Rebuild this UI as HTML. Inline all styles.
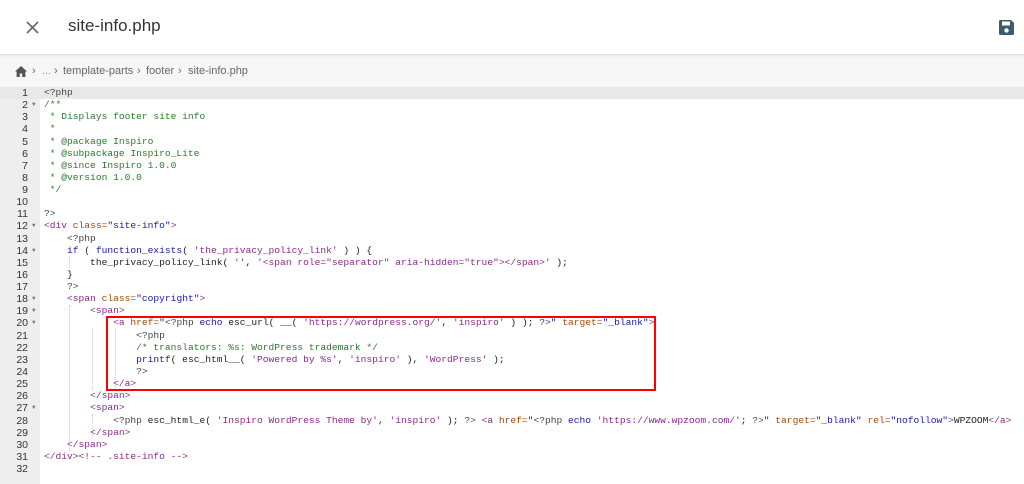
<!DOCTYPE html>
<html><head><style>
body{margin:0;width:1024px;height:484px;overflow:hidden;background:#fff;font-family:"Liberation Sans",sans-serif;position:relative}
.hdr{position:absolute;left:0;top:0;width:1024px;height:54px;background:#fff;box-shadow:0 1px 3px rgba(0,0,0,.12);z-index:2}
.title{position:absolute;left:68px;top:16px;font-size:17px;color:#333}
.bc{position:absolute;left:0;top:54px;width:1024px;height:33px;background:#f6f6f6}
.bci{position:absolute;top:65px;font-size:11px;color:#666}
.gut{position:absolute;left:0;top:87px;width:40px;height:397px;background:#eeeeee}
.hl{position:absolute;left:0;top:87px;width:1024px;height:12px;background:#e8e8e8}
.code{position:absolute;left:0;top:87px;font-family:"Liberation Mono",monospace;font-size:9.6px;line-height:12.13px;white-space:pre;color:#222}
.ln{position:absolute;left:0;width:28px;text-align:right;color:#333;font-family:"Liberation Sans",sans-serif;font-size:10.5px}
.fd{position:absolute;left:32px;color:#777;font-size:6px}
.c{color:#2a7a2a}.t{color:#8a2a8a}.a{color:#9a4a10}.s{color:#1a1aa6}.k{color:#1a1a9a}.p{color:#444}
.box{position:absolute;left:106px;top:316px;width:546px;height:71px;border:2.5px solid #f00}
.g{position:absolute;border-left:1px dotted #ccc;width:0}
</style></head><body>
<div class="hdr">
<svg style="position:absolute;left:26px;top:21px" width="13" height="13" viewBox="0 0 13 13"><path d="M1 1L12 12M12 1L1 12" stroke="#666" stroke-width="1.6"/></svg>
<div class="title">site-info.php</div>
<svg style="position:absolute;left:999px;top:20px" width="15" height="15" viewBox="0 0 15 15"><path d="M0 1.5Q0 0 1.5 0H12L15 3V13.5Q15 15 13.5 15H1.5Q0 15 0 13.5Z" fill="#3e5b6d"/><rect x="3" y="1.5" width="8" height="4" fill="#fff"/><circle cx="7.5" cy="10.5" r="2.2" fill="#fff"/></svg>
</div>
<div class="bc"></div>
<svg style="position:absolute;left:15px;top:66px" width="12" height="11" viewBox="0 0 12 11"><path d="M6 0L0 5.5H1.6V11H4.8V7.5H7.2V11H10.4V5.5H12Z" fill="#555"/></svg>
<div class="bci" style="left:32px">›</div>
<div class="bci" style="left:42px;color:#999">...</div>
<div class="bci" style="left:54px">›</div>
<div class="bci" style="left:63px">template-parts</div>
<div class="bci" style="left:137px">›</div>
<div class="bci" style="left:146px">footer</div>
<div class="bci" style="left:178px">›</div>
<div class="bci" style="left:188px">site-info.php</div>
<div class="gut"></div><div class="hl"></div>
<div class="g" style="left:69px;top:256px;height:12px"></div>
<div class="g" style="left:69px;top:305px;height:146px"></div>
<div class="g" style="left:92px;top:329px;height:61px"></div>
<div class="g" style="left:92px;top:414px;height:24px"></div>
<div class="g" style="left:115px;top:329px;height:61px"></div>
<div class="code" id="c"></div>
<div class="box"></div>
<script>
var L=[
'<span class="p">&lt;?php</span>',
'<span class="c">/**</span>',
'<span class="c"> * Displays footer site info</span>',
'<span class="c"> *</span>',
'<span class="c"> * @package Inspiro</span>',
'<span class="c"> * @subpackage Inspiro_Lite</span>',
'<span class="c"> * @since Inspiro 1.0.0</span>',
'<span class="c"> * @version 1.0.0</span>',
'<span class="c"> */</span>',
'',
'<span class="p">?&gt;</span>',
'<span class="t">&lt;div</span> <span class="a">class=</span><span class="s">"site-info"</span><span class="t">&gt;</span>',
'    <span class="p">&lt;?php</span>',
'    <span class="k">if</span> ( <span class="k">function_exists</span>( <span class="t">\'the_privacy_policy_link\'</span> ) ) {',
'        the_privacy_policy_link( <span class="t">\'\'</span>, <span class="t">\'&lt;span role="separator" aria-hidden="true"&gt;&lt;/span&gt;\'</span> );',
'    }',
'    <span class="p">?&gt;</span>',
'    <span class="t">&lt;span</span> <span class="a">class=</span><span class="s">"copyright"</span><span class="t">&gt;</span>',
'        <span class="t">&lt;span&gt;</span>',
'            <span class="t">&lt;a</span> <span class="a">href=</span><span class="s">"</span><span class="p">&lt;?php</span> <span class="k">echo</span> esc_url( __( <span class="t">\'https://wordpress.org/\'</span>, <span class="t">\'inspiro\'</span> ) ); <span class="p">?&gt;</span><span class="s">"</span> <span class="a">target=</span><span class="s">"_blank"</span><span class="t">&gt;</span>',
'                <span class="p">&lt;?php</span>',
'                <span class="c">/* translators: %s: WordPress trademark */</span>',
'                <span class="k">printf</span>( esc_html__( <span class="t">\'Powered by %s\'</span>, <span class="t">\'inspiro\'</span> ), <span class="t">\'WordPress\'</span> );',
'                <span class="p">?&gt;</span>',
'            <span class="t">&lt;/a&gt;</span>',
'        <span class="t">&lt;/span&gt;</span>',
'        <span class="t">&lt;span&gt;</span>',
'            <span class="p">&lt;?php</span> esc_html_e( <span class="t">\'Inspiro WordPress Theme by\'</span>, <span class="t">\'inspiro\'</span> ); <span class="p">?&gt;</span> <span class="t">&lt;a</span> <span class="a">href=</span><span class="s">"</span><span class="p">&lt;?php</span> <span class="k">echo</span> <span class="t">\'https://www.wpzoom.com/\'</span>; <span class="p">?&gt;</span><span class="s">"</span> <span class="a">target=</span><span class="s">"_blank"</span> <span class="a">rel=</span><span class="s">"nofollow"</span><span class="t">&gt;</span>WPZOOM<span class="t">&lt;/a&gt;</span>',
'        <span class="t">&lt;/span&gt;</span>',
'    <span class="t">&lt;/span&gt;</span>',
'<span class="t">&lt;/div&gt;&lt;!-- .site-info --&gt;</span>',
''];
var folds=[2,12,14,18,19,20,27];
var h='';
for(var i=0;i<32;i++){var y=(i*12.13).toFixed(2);
h+='<div class="ln" style="top:'+y+'px">'+(i+1)+'</div>';
if(folds.indexOf(i+1)>=0)h+='<div class="fd" style="top:'+y+'px">▼</div>';
h+='<div style="position:absolute;left:44px;top:'+y+'px">'+L[i]+'</div>';}
document.getElementById('c').innerHTML=h;
</script>
</body></html>
